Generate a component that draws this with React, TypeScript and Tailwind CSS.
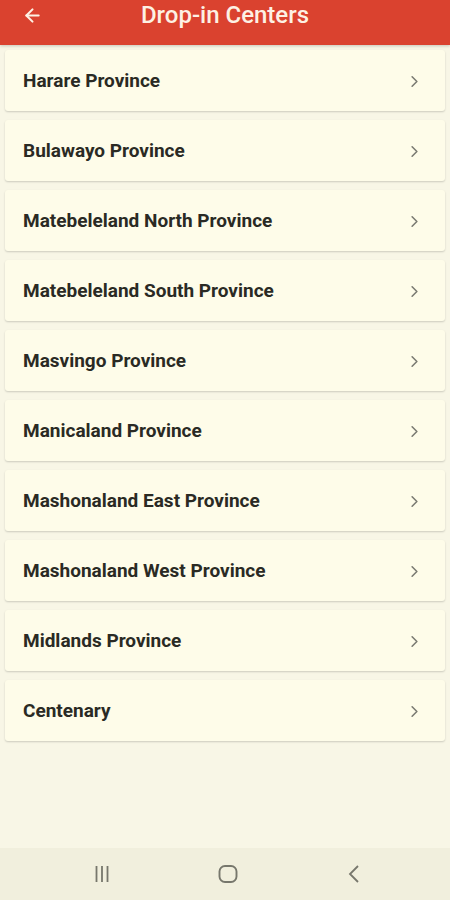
import { ArrowLeft, ChevronRight } from "lucide-react";

const PROVINCES = [
  "Harare Province",
  "Bulawayo Province",
  "Matebeleland North Province",
  "Matebeleland South Province",
  "Masvingo Province",
  "Manicaland Province",
  "Mashonaland East Province",
  "Mashonaland West Province",
  "Midlands Province",
  "Centenary",
];

export default function App() {
  return (
    <div
      className="w-[450px] h-[900px] flex flex-col bg-[#f8f6e6] overflow-hidden"
      style={{ fontFamily: "Roboto, 'Noto Sans', sans-serif" }}
    >
      <header className="h-[45px] shrink-0 bg-[#da422f] flex items-center relative shadow-[0_1px_3px_rgba(0,0,0,0.2)]">
        <ArrowLeft className="absolute left-[22px] top-[5px] w-[21px] h-[21px] text-[#fdf1e4]" strokeWidth={2.4} />
        <h1 className="w-full text-center text-[24px] leading-[28px] font-medium text-[#fdf1e4] -mt-[16px]">Drop-in Centers</h1>
      </header>

      <main className="flex-1 flex flex-col gap-[9px] px-[5px] pt-[5px]">
        {PROVINCES.map((p) => (
          <div
            key={p}
            className="h-[61px] flex items-center justify-between pl-[18px] pr-[21px] pt-[2px] rounded-[3px] bg-[#fefce9] shadow-[0_1px_2px_rgba(0,0,0,0.18)]"
          >
            <span className="text-[19px] font-bold text-[#2a2a24]">{p}</span>
            <ChevronRight className="w-[19px] h-[19px] text-[#7a7a72]" strokeWidth={2} />
          </div>
        ))}
      </main>

      <nav className="h-[52px] shrink-0 bg-[#f1efdd] flex items-center justify-center pl-[5px]">
        <div className="w-[126px] flex justify-center">
          <svg width="18" height="18" viewBox="0 0 18 18" className="text-[#77776c]">
            <path d="M3.5 1v16M9 1v16M14.5 1v16" stroke="currentColor" strokeWidth="1.8" />
          </svg>
        </div>
        <div className="w-[126px] flex justify-center">
          <svg width="20" height="20" viewBox="0 0 20 20" className="text-[#77776c]">
            <rect x="1.5" y="2" width="17" height="16" rx="5.5" fill="none" stroke="currentColor" strokeWidth="1.9" />
          </svg>
        </div>
        <div className="w-[126px] flex justify-center">
          <svg width="18" height="18" viewBox="0 0 18 18" className="text-[#77776c]">
            <path d="M13 1L5 9l8 8" fill="none" stroke="currentColor" strokeWidth="1.8" />
          </svg>
        </div>
      </nav>
    </div>
  );
}
